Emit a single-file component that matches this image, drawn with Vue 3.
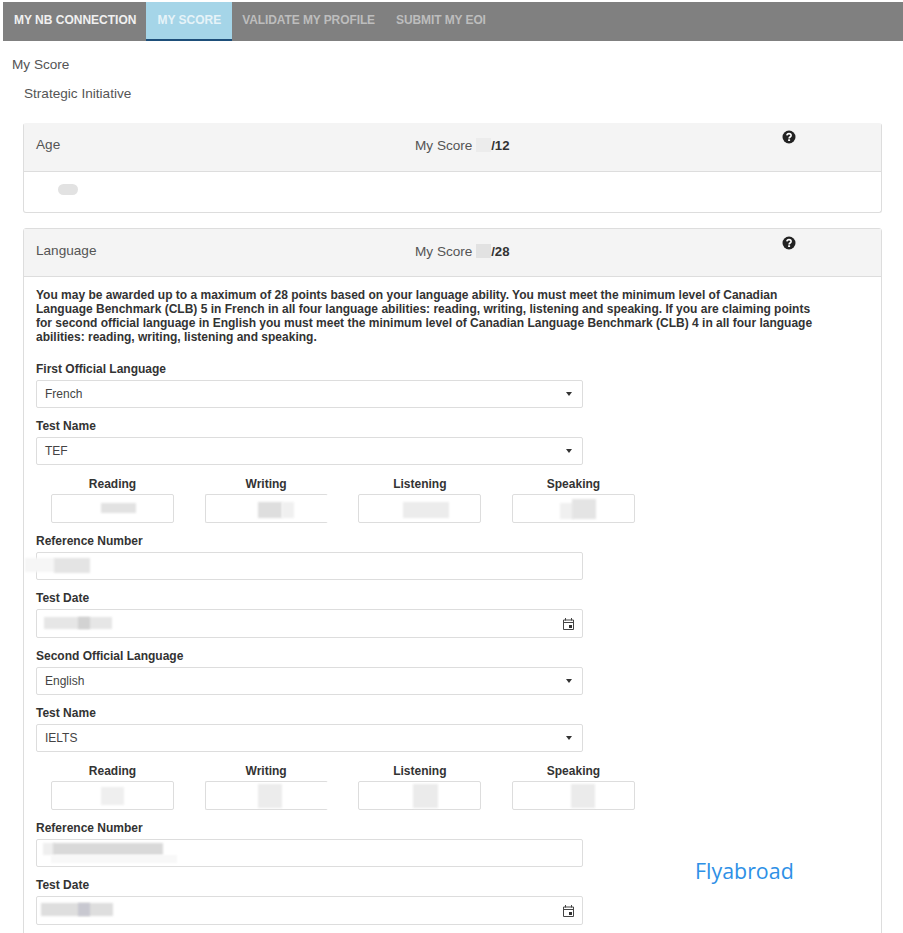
<script setup>
const tabs = [
  { label: 'MY NB CONNECTION', state: 'done' },
  { label: 'MY SCORE', state: 'active' },
  { label: 'VALIDATE MY PROFILE', state: 'todo' },
  { label: 'SUBMIT MY EOI', state: 'todo' }
]
const patch = (l, t, w, h, c) => ({ left: l + 'px', top: t + 'px', width: w + 'px', height: h + 'px', background: c })
const blocks = [
  {
    first: 'First Official Language', firstValue: 'French', test: 'TEF',
    scores: [
      { name: 'Reading', blur: [patch(49, 8, 35, 10, '#e2e2e2')], cut: false },
      { name: 'Writing', blur: [patch(52, 7, 24, 16, '#dedede'), patch(76, 7, 12, 16, '#f0f0f0')], cut: true },
      { name: 'Listening', blur: [patch(44, 7, 46, 16, '#ececec')], cut: false },
      { name: 'Speaking', blur: [patch(47, 8, 14, 16, '#f0f0f0'), patch(59, 4, 24, 20, '#e4e4e4')], cut: false }
    ],
    ref: [patch(-12, 5, 30, 14, '#f6f6f6'), patch(17, 5, 36, 15, '#e4e4e4')],
    date: [patch(7, 7, 68, 12, '#e6e6e6'), patch(41, 7, 12, 12, '#d2d2d2')]
  },
  {
    first: 'Second Official Language', firstValue: 'English', test: 'IELTS',
    scores: [
      { name: 'Reading', blur: [patch(49, 5, 23, 18, '#efefef')], cut: false },
      { name: 'Writing', blur: [patch(52, 2, 24, 24, '#ececec')], cut: true },
      { name: 'Listening', blur: [patch(54, 2, 25, 24, '#ebebeb')], cut: false },
      { name: 'Speaking', blur: [patch(58, 2, 24, 24, '#ebebeb')], cut: false }
    ],
    ref: [patch(6, 3, 12, 12, '#efefef'), patch(16, 3, 110, 12, '#d9d9d9'), patch(14, 15, 126, 8, '#f8f8f8')],
    date: [patch(4, 6, 72, 13, '#dedede'), patch(41, 6, 12, 13, '#c8c8d0')]
  }
]
</script>

<template>
  <div class="page">
    <nav class="nav">
      <a v-for="t in tabs" :key="t.label" class="tab" :class="t.state">{{ t.label }}</a>
    </nav>

    <div class="crumb">My Score</div>
    <div class="sub">Strategic Initiative</div>

    <section class="panel age">
      <header class="head">
        <span class="title">Age</span>
        <span class="score">My Score <i class="hide small"></i><b>/12</b></span>
        <svg class="help" viewBox="0 0 14 14" aria-hidden="true">
          <circle cx="7" cy="7" r="6.5" fill="#222" />
          <path d="M4.9 5.4C5 4.2 5.9 3.6 7 3.6c1.2 0 2.1.7 2.1 1.8 0 1.6-2 1.6-2 3" fill="none" stroke="#fff" stroke-width="1.6" />
          <rect x="6.1" y="9.3" width="2" height="1.7" fill="#fff" />
        </svg>
      </header>
      <div class="age-body"><i class="age-blur"></i></div>
    </section>

    <section class="panel lang">
      <header class="head">
        <span class="title">Language</span>
        <span class="score">My Score <i class="hide"></i><b>/28</b></span>
        <svg class="help" viewBox="0 0 14 14" aria-hidden="true">
          <circle cx="7" cy="7" r="6.5" fill="#222" />
          <path d="M4.9 5.4C5 4.2 5.9 3.6 7 3.6c1.2 0 2.1.7 2.1 1.8 0 1.6-2 1.6-2 3" fill="none" stroke="#fff" stroke-width="1.6" />
          <rect x="6.1" y="9.3" width="2" height="1.7" fill="#fff" />
        </svg>
      </header>
      <div class="lang-body">
        <p class="intro">You may be awarded up to a maximum of 28 points based on your language ability. You must meet the minimum level of Canadian<br />Language Benchmark (CLB) 5 in French in all four language abilities: reading, writing, listening and speaking. If you are claiming points<br />for second official language in English you must meet the minimum level of Canadian Language Benchmark (CLB) 4 in all four language<br />abilities: reading, writing, listening and speaking.</p>

        <div v-for="b in blocks" :key="b.first" class="block">
          <div class="group">
            <label class="lbl">{{ b.first }}</label>
            <div class="ctrl">{{ b.firstValue }}<i class="caret"></i></div>
          </div>
          <div class="group">
            <label class="lbl">Test Name</label>
            <div class="ctrl">{{ b.test }}<i class="caret"></i></div>
          </div>
          <div class="scores">
            <div v-for="s in b.scores" :key="s.name" class="scorebox">
              <label class="lbl center">{{ s.name }}</label>
              <div class="mini" :class="{ cut: s.cut }">
                <i v-for="(p, i) in s.blur" :key="i" class="blur" :style="p"></i>
              </div>
            </div>
          </div>
          <div class="group">
            <label class="lbl">Reference Number</label>
            <div class="ctrl"><i v-for="(p, i) in b.ref" :key="i" class="blur" :style="p"></i></div>
          </div>
          <div class="group">
            <label class="lbl">Test Date</label>
            <div class="ctrl tall">
              <i v-for="(p, i) in b.date" :key="i" class="blur" :style="p"></i>
              <svg class="cal" viewBox="0 0 11 12" aria-hidden="true">
                <path d="M.5 2h10v9.5H.5zM.5 4.5h10" fill="none" stroke="#444" />
                <path d="M2.5 0v2.5M8.5 0v2.5" stroke="#444" />
                <rect x="6" y="7" width="3" height="3" fill="#333" />
              </svg>
            </div>
          </div>
        </div>
      </div>
    </section>

    <div class="mark">Flyabroad</div>
  </div>
</template>

<style scoped>
.page {
  position: relative;
  height: 933px;
  overflow: hidden;
  padding-top: 2px;
  box-sizing: border-box;
  background: #fff;
  font-family: "Liberation Sans", Arial, sans-serif;
  color: #555;
}
.nav {
  display: flex;
  height: 38.5px;
  margin-left: 3px;
  background: #808080;
}
.tab {
  padding: 0 10.5px;
  font-size: 12px;
  font-weight: 700;
  line-height: 36px;
}
.done { color: #f0f0f0; padding: 0 10px 0 11px; }
.todo { color: #bdbdbd; letter-spacing: -0.1px; }
.active {
  background: #a5d5e8;
  color: #e6f3f8;
  padding: 0 10.5px 0 11px;
  border-bottom: 2px solid #1d4e79;
}
.crumb {
  margin: 15.5px 0 0 12px;
  font-size: 13.6px;
  line-height: 18px;
}
.sub {
  margin: 11px 0 0 24px;
  font-size: 13.6px;
  line-height: 18px;
}
.panel {
  margin: 0 21px 0 23px;
  border: 1px solid #ddd;
  border-radius: 3px;
  box-sizing: border-box;
}
.age {
  margin-top: 20px;
  height: 90px;
  border-top-color: #f4f4f4;
}
.lang { margin-top: 15px; }
.head {
  position: relative;
  height: 48px;
  box-sizing: border-box;
  padding-left: 12px;
  padding-bottom: 5px;
  display: flex;
  align-items: center;
  background: #f4f4f4;
  border-bottom: 1px solid #ddd;
}
.age .head { padding-bottom: 7px; }
.title {
  width: 379px;
  font-size: 13.6px;
  color: #555;
}
.score {
  margin-top: 2px;
  font-size: 13.6px;
  color: #555;
  display: flex;
  align-items: center;
  white-space: pre;
}
.score b {
  font-size: 13.2px;
  color: #333;
}
.hide {
  width: 15px;
  height: 14px;
  background: #e2e2e2;
}
.hide.small { background: #ececec; }
.help {
  position: absolute;
  left: 758px;
  top: 7px;
  width: 14px;
  height: 14px;
}
.age .help { top: 6px; }
.age-body {
  position: relative;
  height: 40px;
}
.age-blur {
  position: absolute;
  left: 34px;
  top: 12px;
  width: 20px;
  height: 11px;
  border-radius: 6px;
  background: #e2e2e2;
}
.lang-body {
  padding: 11px 12px 30px;
}
.intro {
  margin: 0 0 17px;
  white-space: nowrap;
  font-size: 12px;
  font-weight: 700;
  line-height: 14px;
  color: #333;
}
.group { margin-bottom: 10px; }
.lbl {
  display: block;
  height: 17px;
  margin-bottom: 2px;
  font-size: 12px;
  font-weight: 700;
  line-height: 17px;
  color: #333;
}
.center { text-align: center; margin-bottom: 1px; }
.ctrl {
  position: relative;
  width: 547px;
  height: 28px;
  box-sizing: border-box;
  padding-left: 8px;
  border: 1px solid #ddd;
  border-radius: 2px;
  font-size: 12px;
  line-height: 26px;
  color: #444;
}
.tall { height: 29px; }
.caret {
  position: absolute;
  right: 10px;
  top: 11px;
  border: 3.5px solid transparent;
  border-top: 4px solid #333;
  border-bottom: 0;
}
.cal {
  position: absolute;
  right: 8px;
  top: 8px;
  width: 11px;
  height: 12px;
}
.blur { position: absolute; display: block; filter: blur(1px); }
.scores {
  display: flex;
  gap: 30.67px;
  margin: 11px 0 10px 15px;
}
.scorebox { width: 123px; }
.mini {
  position: relative;
  height: 29px;
  box-sizing: border-box;
  border: 1px solid #ddd;
  border-radius: 2px;
}
.cut { border-right-color: transparent; }
.mark {
  position: absolute;
  left: 695px;
  top: 855px;
  font-family: "Open Sans", sans-serif;
  font-size: 21.4px;
  line-height: 32px;
  color: #2e90e6;
}
</style>

<style>
html, body { overflow: hidden; }
</style>
